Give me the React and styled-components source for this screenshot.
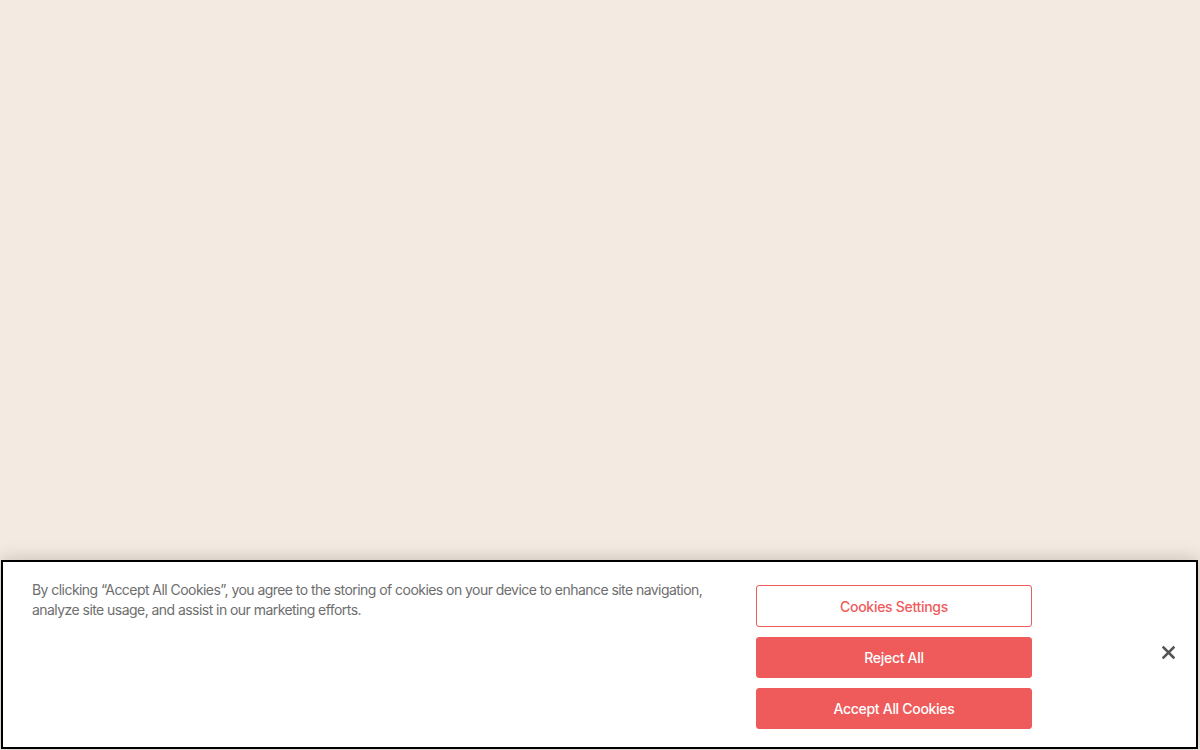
import React from 'react'
import styled, { createGlobalStyle } from 'styled-components'

const GlobalStyle = createGlobalStyle`
  html, body {
    margin: 0;
    padding: 0;
    background: #f3eae1;
  }
  * { box-sizing: border-box; }
`

const Page = styled.div`
  height: 750px;
  display: flex;
  flex-direction: column;
  justify-content: flex-end;
  font-family: Inter, "Noto Sans", sans-serif;
`

const Banner = styled.div`
  position: relative;
  height: 189px;
  margin: 0 2px 1px 1px;
  background: #fff;
  border: 2px solid #000;
  box-shadow: 0 0 18px rgba(0, 0, 0, 0.2);
  display: flex;
  align-items: flex-start;
`

const Policy = styled.div`
  width: 753px;
  flex-shrink: 0;
  padding: 18px 0 0 29px;
`

const PolicyText = styled.p`
  margin: 0;
  font-size: 14px;
  line-height: 20px;
  color: #6e6e6e;
  letter-spacing: -0.55px;
  width: 690px;
`

const Actions = styled.div`
  display: flex;
  flex-direction: column;
  gap: 10px;
  padding-top: 23px;
  width: 276px;
  flex-shrink: 0;
`

const Button = styled.button`
  height: ${p => (p.$outline ? '42px' : '41px')};
  width: 100%;
  border-radius: 3px;
  border: 1px solid #ef5b5b;
  background: ${p => (p.$outline ? '#fff' : '#ef5b5b')};
  color: ${p => (p.$outline ? '#ef5b5b' : '#fff')};
  font-family: inherit;
  font-size: 14px;
  font-weight: 500;
  letter-spacing: -0.3px;
  cursor: pointer;
`

const Close = styled.button`
  position: absolute;
  right: 11px;
  top: 73px;
  width: 34px;
  height: 34px;
  border: 0;
  background: transparent;
  display: flex;
  align-items: center;
  justify-content: center;
  cursor: pointer;
  padding: 0;
`

export default function App() {
  return (
    <>
      <GlobalStyle />
      <Page>
        <Banner>
          <Policy>
            <PolicyText>
              By clicking “Accept All Cookies”, you agree to the storing of cookies on your device to enhance site navigation, analyze site usage, and assist in our marketing efforts.
            </PolicyText>
          </Policy>
          <Actions>
            <Button $outline>Cookies Settings</Button>
            <Button>Reject All</Button>
            <Button>Accept All Cookies</Button>
          </Actions>
          <Close aria-label="Close">
            <svg width="13" height="13" viewBox="0 0 13 13">
              <path d="M1.5 1.5 L11.5 11.5 M11.5 1.5 L1.5 11.5" stroke="#555" strokeWidth="2.6" strokeLinecap="square" />
            </svg>
          </Close>
        </Banner>
      </Page>
    </>
  )
}
